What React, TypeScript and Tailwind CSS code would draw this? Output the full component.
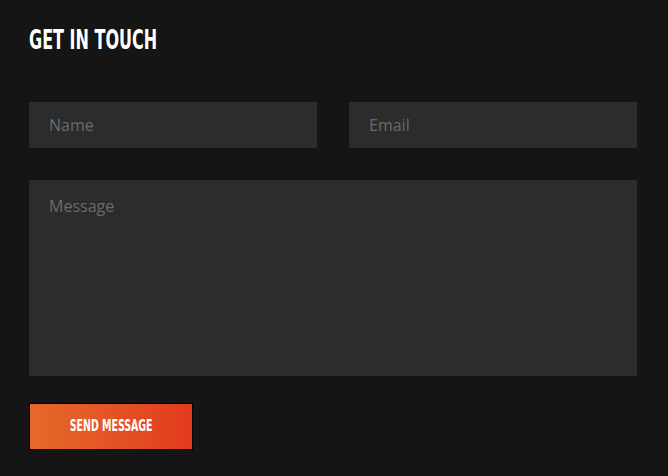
import React from 'react';

export default function App() {
  return (
    <div className="min-h-[476px] w-full bg-[#151515] pl-[29px] pr-[31px] pt-[24px]">
      <h2 className="origin-left scale-x-[0.685] font-['DejaVu_Sans_Condensed',sans-serif] text-[26px] font-bold leading-[32px] text-white">
        GET IN TOUCH
      </h2>

      <form className="mt-[46px] flex flex-col" onSubmit={e => e.preventDefault()}>
        <div className="grid grid-cols-2 gap-8">
          <input
            type="text"
            placeholder="Name"
            className="h-[46px] w-full rounded-[1px] bg-[#2c2c2c] px-5 font-['Open_Sans',sans-serif] text-[16px] text-white outline-none placeholder:text-[#6b6b6b]"
          />
          <input
            type="email"
            placeholder="Email"
            className="h-[46px] w-full rounded-[1px] bg-[#2c2c2c] px-5 font-['Open_Sans',sans-serif] text-[16px] text-white outline-none placeholder:text-[#6b6b6b]"
          />
        </div>

        <textarea
          placeholder="Message"
          className="mt-8 h-[196px] w-full resize-none rounded-[1px] bg-[#2c2c2c] px-5 pt-[14px] font-['Open_Sans',sans-serif] text-[16px] text-white outline-none placeholder:text-[#6b6b6b]"
        />

        <div className="mt-[27px]">
          <button
            type="submit"
            className="flex h-[47px] w-[164px] items-center justify-center border border-black bg-gradient-to-r from-[#e5692a] to-[#e2391e] text-white"
          >
            <span className="inline-block scale-x-[0.7] font-['DejaVu_Sans_Condensed',sans-serif] text-[15px] font-bold">
              SEND MESSAGE
            </span>
          </button>
        </div>
      </form>
    </div>
  );
}
